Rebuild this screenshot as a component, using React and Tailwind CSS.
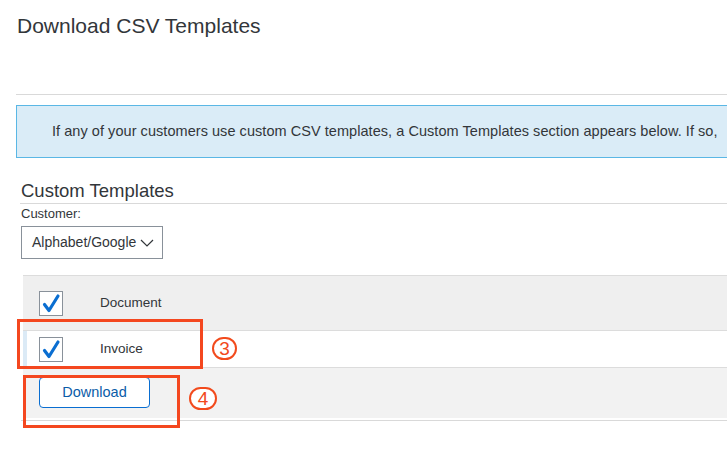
import React from 'react';

// Download CSV Templates page with tutorial call-outs (boxes + numbered circles).

function Check() {
  return (
    <span className="flex h-[25px] w-[24px] shrink-0 items-center justify-center border border-[#89919a] bg-white">
      <svg width="20" height="21" viewBox="0 0 20 21" fill="none">
        <path d="M3.5 11.5 L8 17.5 L17 3" stroke="#0a6ed1" strokeWidth="3.2" strokeLinecap="round" strokeLinejoin="round" />
      </svg>
    </span>
  );
}

function Callout({ n, className }) {
  return (
    <div className={`absolute flex items-center justify-center rounded-full border-[2.5px] border-[#f24a1c] bg-white text-[19px] leading-none text-[#f24a1c] ${className}`}>
      {n}
    </div>
  );
}

export default function App() {
  return (
    <div
      className="relative h-[452px] w-[727px] overflow-hidden bg-white text-[#32363a]"
      style={{ fontFamily: '"Liberation Sans", Arial, sans-serif' }}
    >
      <div className="w-[1000px]">
        <h1 className="pl-[17px] pt-[12px] text-[21px] leading-[28px]">Download CSV Templates</h1>

        <div className="ml-[16px] mt-[54px] border-t border-[#d9d9d9]" />

        <div className="ml-[16px] mt-[10px] flex h-[53px] w-[740px] items-center border border-[#5ab7e5] bg-[#daecf7] pl-[35px] text-[14.5px] tracking-[0.05px] whitespace-nowrap">
          If any of your customers use custom CSV templates, a Custom Templates section appears below. If so,
        </div>

        <div className="ml-[20px] mt-[20px] border-b border-[#d9d9d9] pl-[1px] text-[18.5px] leading-[25px]">
          Custom Templates
        </div>

        <div className="ml-[21px] mt-[2px] text-[13px] leading-[16px]">Customer:</div>

        <div className="ml-[21px] mt-[4px] flex h-[33px] w-[142px] items-center justify-between border border-[#89919a] pl-[10px] pr-[8px] text-[14px]">
          <span>Alphabet/Google</span>
          <svg width="14" height="8" viewBox="0 0 14 8" fill="none">
            <path d="M1 1 L7 7 L13 1" stroke="#32363a" strokeWidth="1.2" />
          </svg>
        </div>

        <div className="ml-[23px] mt-[16px] border-t border-[#dcdcdc]">
          <div className="flex h-[55px] items-center border-b border-[#dcdcdc] bg-[#efefef] pl-[16px] text-[13.5px]">
            <Check />
            <span className="ml-[37px]">Document</span>
          </div>
          <div className="flex h-[37px] items-center border-b border-[#dcdcdc] bg-white text-[13.5px]">
            <span className="h-full w-[4px] bg-[#dbeaf6]" />
            <span className="ml-[12px]"><Check /></span>
            <span className="ml-[37px]">Invoice</span>
          </div>
          <div className="flex h-[50px] items-start bg-[#f2f2f2] pl-[16px] pt-[9px]">
            <button className="flex h-[31px] w-[111px] items-center justify-center rounded-[4px] border border-[#0a6ed1] bg-white text-[14.5px] text-[#0a5ca8]">
              Download
            </button>
          </div>
        </div>
        <div className="ml-[21px] mt-[2px] border-t border-[#d9d9d9]" />
      </div>

      {/* call-outs */}
      <div className="absolute left-[17px] top-[319px] h-[50px] w-[186px] border-[3px] border-[#f4471f]" />
      <Callout n="3" className="left-[212px] top-[337px] h-[23px] w-[25px]" />
      <div className="absolute left-[23px] top-[375px] h-[53px] w-[157px] border-[3px] border-[#f4471f]" />
      <Callout n="4" className="left-[189px] top-[387px] h-[23px] w-[28px]" />
    </div>
  );
}
